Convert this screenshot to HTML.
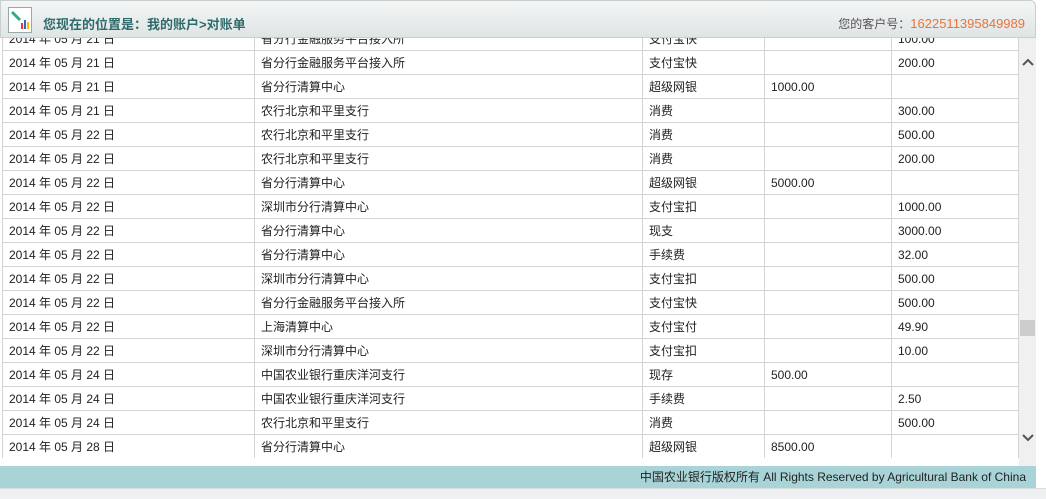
<!DOCTYPE html>
<html><head><meta charset="utf-8"><style>
*{margin:0;padding:0;box-sizing:border-box}
body{width:1046px;height:499px;overflow:hidden;background:#fff;font-family:"Liberation Sans","Noto Sans CJK SC",sans-serif;font-size:12px;color:#222;position:relative}
#hdr{position:absolute;left:0;top:0;width:1036px;height:38px;background:linear-gradient(#f4f6f6,#dfe4e4);border:1px solid #c8cfcf;border-radius:0 6px 0 0;z-index:2}
#hdr .t{position:absolute;left:42px;top:13px;font-size:13px;font-weight:bold;color:#2f6a6a}
#hdr .r{position:absolute;right:10px;top:14px;font-size:12px;color:#555}
#hdr .r span{color:#e8743b;font-size:13px}
#icon{position:absolute;left:7px;top:6px;width:24px;height:26px;background:#fff;border:1px solid #9aa;}
#wrap{position:absolute;left:0;top:26px;width:1019px;height:432px;overflow:hidden}
table{border-collapse:collapse;position:absolute;left:2px;top:0}
td{height:24px;border:1px solid #d4d4d4;padding:0 6px;white-space:nowrap;vertical-align:middle}
#sb{position:absolute;left:1019px;top:38px;width:17px;height:428px;background:#f0f0f0}
#thumb{position:absolute;left:1px;top:282px;width:15px;height:16px;background:#cdcdcd}
.ar{position:absolute;left:3px;font-size:12px;color:#555;font-weight:bold}
#ft{position:absolute;left:0;top:466px;width:1036px;height:22px;background:#a8d4d8;text-align:right;padding-right:10px;line-height:22px;font-size:12px;color:#222}
#bt{position:absolute;left:0;top:488px;width:1046px;height:11px;background:#eef0f2;border-top:1px solid #d8dcdc}
</style></head><body>
<div id="hdr"><div id="icon"><svg width="22" height="24"><path d="M3 4l8 8" stroke="#3a8" stroke-width="3"/><rect x="12" y="15" width="2" height="6" fill="#e33"/><rect x="15" y="12" width="2" height="9" fill="#36c"/><rect x="18" y="14" width="2" height="7" fill="#fb0"/></svg></div><div class="t">您现在的位置是：我的账户&gt;对账单</div><div class="r">您的客户号：<span>1622511395849989</span></div></div>
<div id="wrap"><table>
<colgroup><col style="width:252px"><col style="width:388px"><col style="width:122px"><col style="width:127px"><col style="width:127px"></colgroup>
<tr><td>2014 年 05 月 21 日</td><td>省分行金融服务平台接入所</td><td>支付宝快</td><td></td><td>100.00</td></tr>
<tr><td>2014 年 05 月 21 日</td><td>省分行金融服务平台接入所</td><td>支付宝快</td><td></td><td>200.00</td></tr>
<tr><td>2014 年 05 月 21 日</td><td>省分行清算中心</td><td>超级网银</td><td>1000.00</td><td></td></tr>
<tr><td>2014 年 05 月 21 日</td><td>农行北京和平里支行</td><td>消费</td><td></td><td>300.00</td></tr>
<tr><td>2014 年 05 月 22 日</td><td>农行北京和平里支行</td><td>消费</td><td></td><td>500.00</td></tr>
<tr><td>2014 年 05 月 22 日</td><td>农行北京和平里支行</td><td>消费</td><td></td><td>200.00</td></tr>
<tr><td>2014 年 05 月 22 日</td><td>省分行清算中心</td><td>超级网银</td><td>5000.00</td><td></td></tr>
<tr><td>2014 年 05 月 22 日</td><td>深圳市分行清算中心</td><td>支付宝扣</td><td></td><td>1000.00</td></tr>
<tr><td>2014 年 05 月 22 日</td><td>省分行清算中心</td><td>现支</td><td></td><td>3000.00</td></tr>
<tr><td>2014 年 05 月 22 日</td><td>省分行清算中心</td><td>手续费</td><td></td><td>32.00</td></tr>
<tr><td>2014 年 05 月 22 日</td><td>深圳市分行清算中心</td><td>支付宝扣</td><td></td><td>500.00</td></tr>
<tr><td>2014 年 05 月 22 日</td><td>省分行金融服务平台接入所</td><td>支付宝快</td><td></td><td>500.00</td></tr>
<tr><td>2014 年 05 月 22 日</td><td>上海清算中心</td><td>支付宝付</td><td></td><td>49.90</td></tr>
<tr><td>2014 年 05 月 22 日</td><td>深圳市分行清算中心</td><td>支付宝扣</td><td></td><td>10.00</td></tr>
<tr><td>2014 年 05 月 24 日</td><td>中国农业银行重庆洋河支行</td><td>现存</td><td>500.00</td><td></td></tr>
<tr><td>2014 年 05 月 24 日</td><td>中国农业银行重庆洋河支行</td><td>手续费</td><td></td><td>2.50</td></tr>
<tr><td>2014 年 05 月 24 日</td><td>农行北京和平里支行</td><td>消费</td><td></td><td>500.00</td></tr>
<tr><td>2014 年 05 月 28 日</td><td>省分行清算中心</td><td>超级网银</td><td>8500.00</td><td></td></tr>
<tr><td>2014 年 05 月 28 日</td><td>省分行清算中心</td><td>消费</td><td></td><td>100.00</td></tr>
</table></div>
<div id="sb"><svg class="ar" style="top:20px" width="12" height="8"><path d="M1 7l5-5 5 5" stroke="#555" stroke-width="2" fill="none"/></svg><div id="thumb"></div><svg class="ar" style="top:396px" width="12" height="8"><path d="M1 1l5 5 5-5" stroke="#555" stroke-width="2" fill="none"/></svg></div>
<div id="ft">中国农业银行版权所有 All Rights Reserved by Agricultural Bank of China</div>
<div id="bt"></div>
</body></html>
